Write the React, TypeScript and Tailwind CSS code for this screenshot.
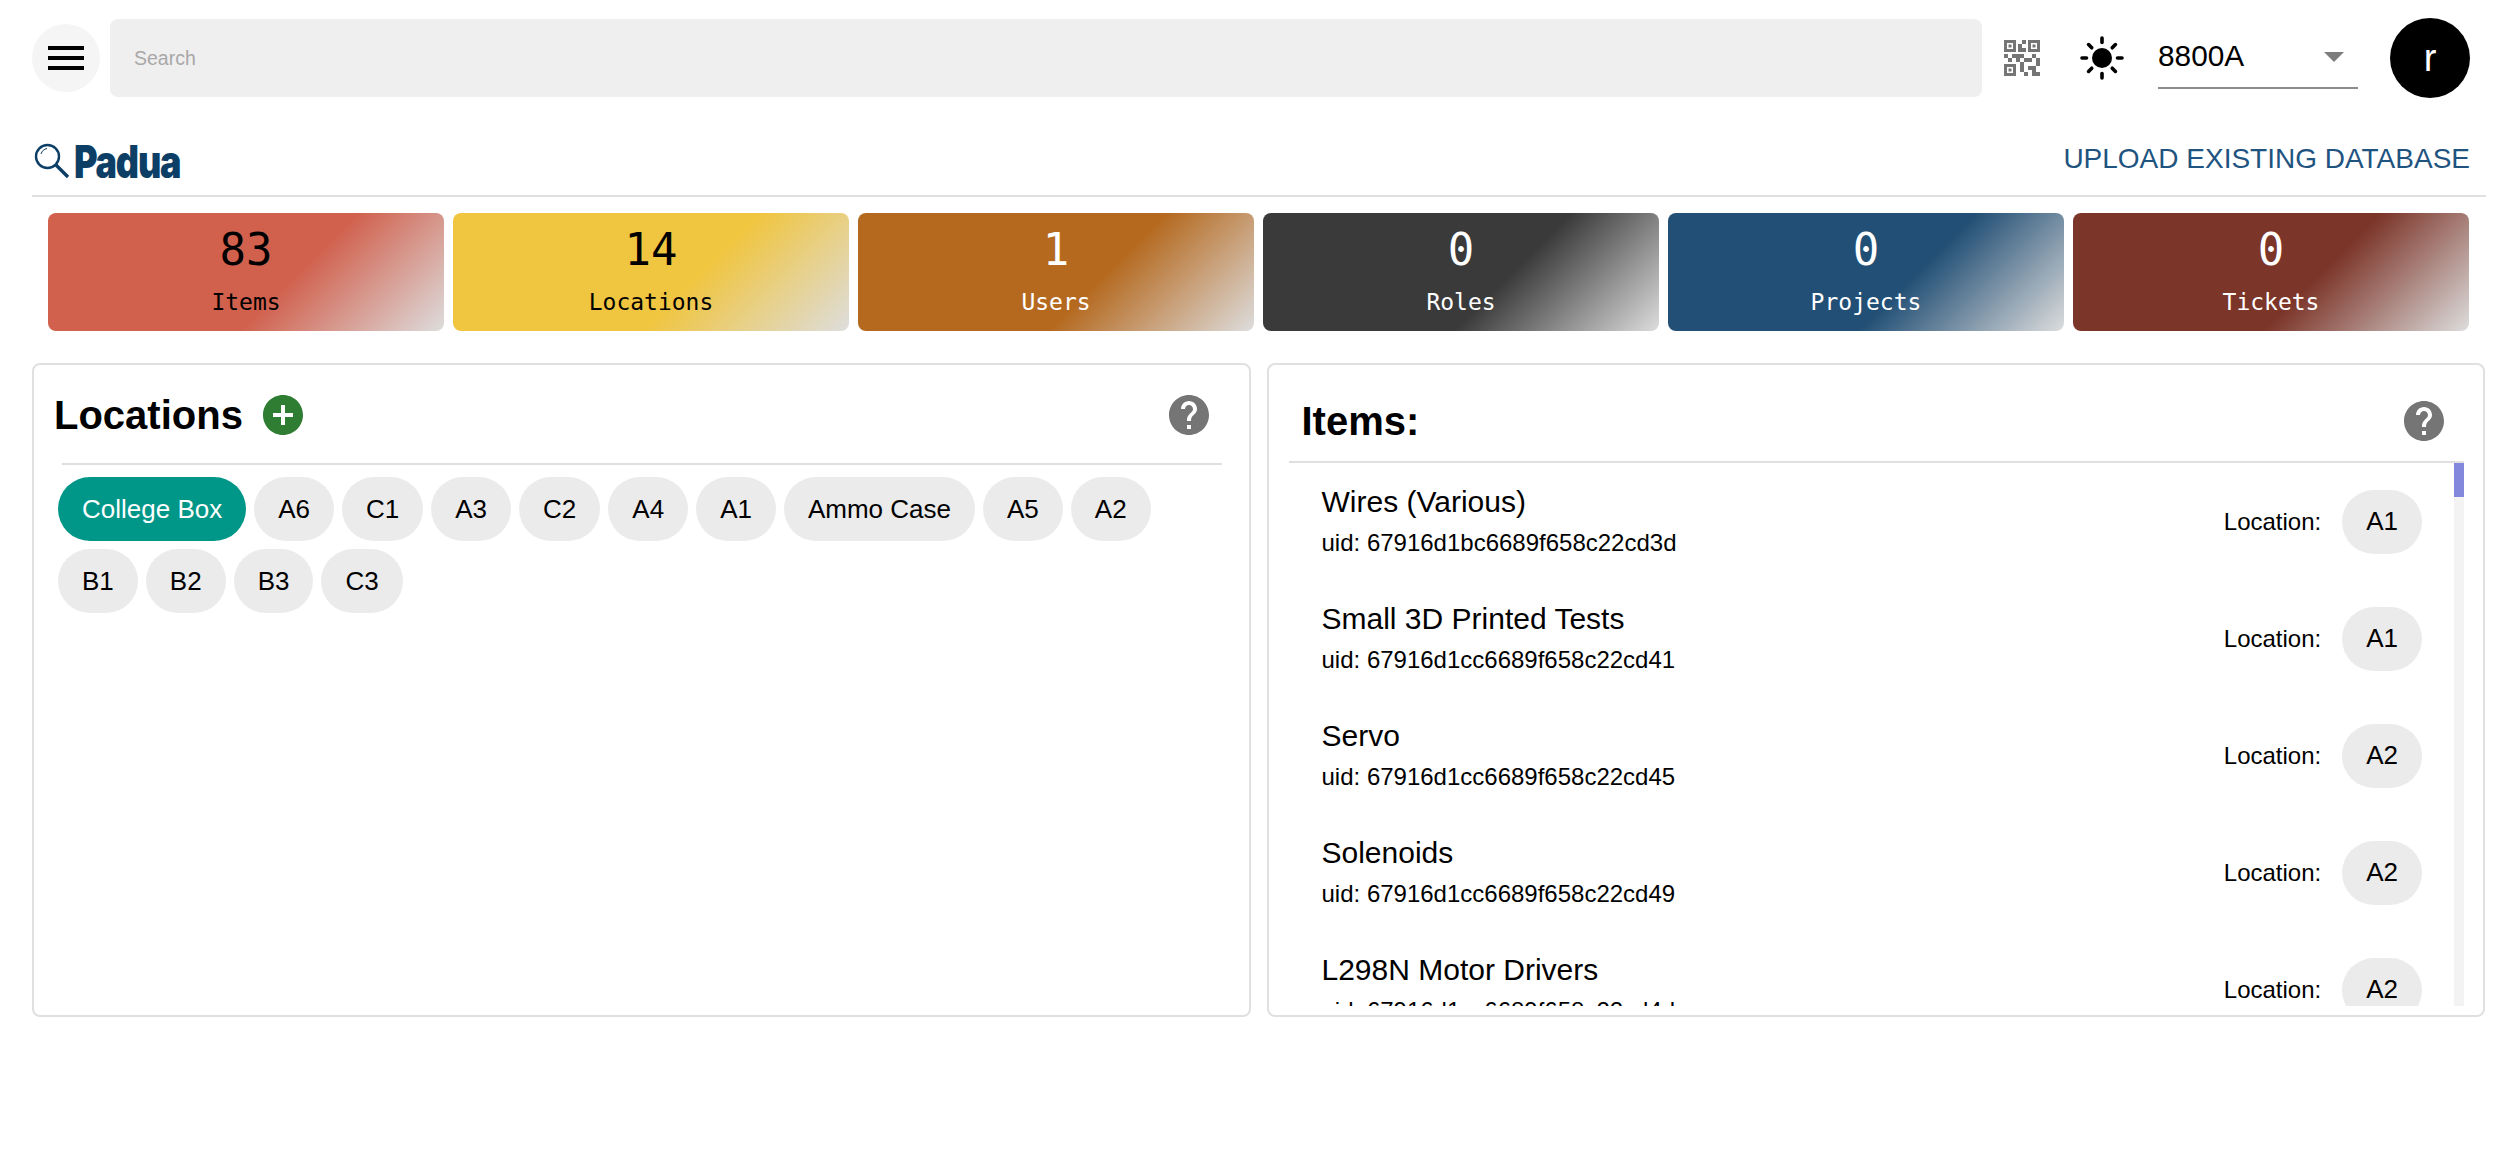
import { MdAddCircle, MdHelp, MdQrCode2 } from "react-icons/md";

const stats = [
  { n: "83", l: "Items", c: "#d1604d", t: "text-black" },
  { n: "14", l: "Locations", c: "#f0c540", t: "text-black" },
  { n: "1", l: "Users", c: "#b5691f", t: "text-white" },
  { n: "0", l: "Roles", c: "#3a3a3a", t: "text-white" },
  { n: "0", l: "Projects", c: "#224f75", t: "text-white" },
  { n: "0", l: "Tickets", c: "#7c3529", t: "text-white" },
];

const chips = ["A6", "C1", "A3", "C2", "A4", "A1", "Ammo Case", "A5", "A2", "B1", "B2", "B3", "C3"];

const items = [
  ["Wires (Various)", "67916d1bc6689f658c22cd3d", "A1"],
  ["Small 3D Printed Tests", "67916d1cc6689f658c22cd41", "A1"],
  ["Servo", "67916d1cc6689f658c22cd45", "A2"],
  ["Solenoids", "67916d1cc6689f658c22cd49", "A2"],
  ["L298N Motor Drivers", "67916d1cc6689f658c22cd4d", "A2"],
];

function Chip({ label, active }: { label: string; active?: boolean }) {
  return (
    <div
      className={`h-16 px-6 rounded-full flex items-center text-[26px] whitespace-nowrap ${
        active ? "bg-[#009688] text-white" : "bg-[#ebebeb] text-black"
      }`}
    >
      {label}
    </div>
  );
}

function Sun() {
  const rays = [0, 45, 90, 135, 180, 225, 270, 315];
  return (
    <svg width="44" height="44" viewBox="0 0 44 44" className="ml-[34px] shrink-0">
      <circle cx="22" cy="22" r="10" fill="#000" />
      {rays.map((a) => (
        <line
          key={a}
          x1="22"
          y1={a % 90 === 0 ? 6.5 : 7.5}
          x2="22"
          y2={a % 90 === 0 ? 2 : 3}
          stroke="#000"
          strokeWidth="3.6"
          strokeLinecap="round"
          transform={`rotate(${a} 22 22)`}
        />
      ))}
    </svg>
  );
}

export default function App() {
  return (
    <div className="w-[2516px] h-[1159px] bg-white font-['Liberation_Sans',Arial,sans-serif] overflow-hidden">
      {/* top bar */}
      <div className="flex items-center pl-8 pr-[46px] pt-[18px] h-[98px]">
        <div className="w-[68px] h-[68px] rounded-full bg-[#f5f5f5] flex flex-col items-center justify-center gap-1.5 shrink-0">
          <div className="w-9 h-1 bg-black" />
          <div className="w-9 h-1 bg-black" />
          <div className="w-9 h-1 bg-black" />
        </div>
        <div className="ml-2.5 flex-1 h-[78px] bg-[#efefef] rounded-lg flex items-center pl-6 pt-[2px] text-[19.5px] text-[#a8a8a8]">
          Search
        </div>
        <MdQrCode2 className="ml-4 w-12 h-12 text-[#757575] shrink-0" />
        <Sun />
        <div className="ml-[34px] w-[200px] h-[71px] pt-[5px] border-b-2 border-[#8c8c8c] flex items-center justify-between pr-[14px] self-start">
          <span className="text-[29.8px] text-black mt-[2px]">8800A</span>
          <div className="w-0 h-0 mt-[3px] border-l-[10px] border-r-[10px] border-t-[10px] border-l-transparent border-r-transparent border-t-[#7d7d7d]" />
        </div>
        <div className="ml-8 w-20 h-20 rounded-full bg-black text-white flex items-center justify-center text-[38px] shrink-0">
          r
        </div>
      </div>

      {/* logo row */}
      <div className="ml-8 w-[2454px] h-[99px] border-b-2 border-[#e0e0e0] flex items-center justify-between pt-[24px] pr-4">
        <div className="flex items-center pl-0.5 mt-[5px]">
          <svg width="36" height="36" viewBox="0 0 36 36" fill="none" stroke="#0d3f66" className="shrink-0">
            <circle cx="13.5" cy="13.5" r="11.5" strokeWidth="2.4" />
            <path d="M7 11c1-3 3-5 6-5.500" strokeWidth="1" />
            <path d="M22 22l12 12" strokeWidth="3.4" />
          </svg>
          <span className="ml-1 text-[45px] leading-none font-black tracking-[-1.5px] text-[#0d3f66] font-['Inter',sans-serif] origin-left scale-x-[0.8]">
            Padua
          </span>
        </div>
        <span className="text-[28px] text-[#1f5480]">UPLOAD EXISTING DATABASE</span>
      </div>

      {/* stats */}
      <div className="grid grid-cols-6 gap-[9px] ml-12 mr-[47px] mt-4">
        {stats.map((s) => (
          <div
            key={s.l}
            className={`h-[118px] rounded-lg flex flex-col items-center font-['DejaVu_Sans_Mono',monospace] ${s.t}`}
            style={{ background: `linear-gradient(135deg, ${s.c} 60%, #dddddd 100%)` }}
          >
            <div className="text-[44px] leading-[74px]">{s.n}</div>
            <div className="text-[23px] leading-[30px]">{s.l}</div>
          </div>
        ))}
      </div>

      {/* panels */}
      <div className="grid grid-cols-2 gap-4 ml-8 w-[2453px] mt-8">
        <div className="min-w-0 h-[654px] border-2 border-[#e0e0e0] rounded-lg flex flex-col">
          <div className="h-[100px] ml-7 mr-[27px] pt-[2px] border-b-2 border-[#e0e0e0] flex items-center justify-between shrink-0">
            <div className="flex items-center -ml-2">
              <span className="text-[40px] font-bold text-black leading-none">Locations</span>
              <MdAddCircle className="ml-4 w-12 h-12 text-[#2e7d32]" />
            </div>
            <MdHelp className="w-12 h-12 text-[#757575] mr-[9px]" />
          </div>
          <div className="flex flex-wrap gap-2 mt-3 pl-6 pr-4">
            <Chip label="College Box" active />
            {chips.map((c) => (
              <Chip key={c} label={c} />
            ))}
          </div>
        </div>

        <div className="min-w-0 h-[654px] border-2 border-[#e0e0e0] rounded-lg flex flex-col pl-5 pr-[19px]">
          <div className="h-[98px] pt-4 border-b-2 border-[#e0e0e0] flex items-center justify-between pl-[13px] pr-4 shrink-0">
            <span className="text-[40px] font-bold text-black leading-none">Items:</span>
            <MdHelp className="w-12 h-12 text-[#757575]" />
          </div>
          <div className="flex h-[543px]">
            <div className="flex-1 overflow-hidden">
              {items.map(([name, uid, loc]) => (
                <div key={uid} className="h-[117px] flex items-center justify-between pl-[33px] pr-8">
                  <div className="flex flex-col pb-px">
                    <span className="text-[30px] leading-[34px] text-black">{name}</span>
                    <span className="text-[24px] leading-[28px] mt-2.5 text-black">uid: {uid}</span>
                  </div>
                  <div className="flex items-center">
                    <span className="text-[24px] text-black mr-[21px]">Location:</span>
                    <Chip label={loc} />
                  </div>
                </div>
              ))}
            </div>
            <div className="w-2.5 bg-[#f3f3f3] shrink-0">
              <div className="h-[34px] bg-[#8488dd]" />
            </div>
          </div>
        </div>
      </div>
    </div>
  );
}
